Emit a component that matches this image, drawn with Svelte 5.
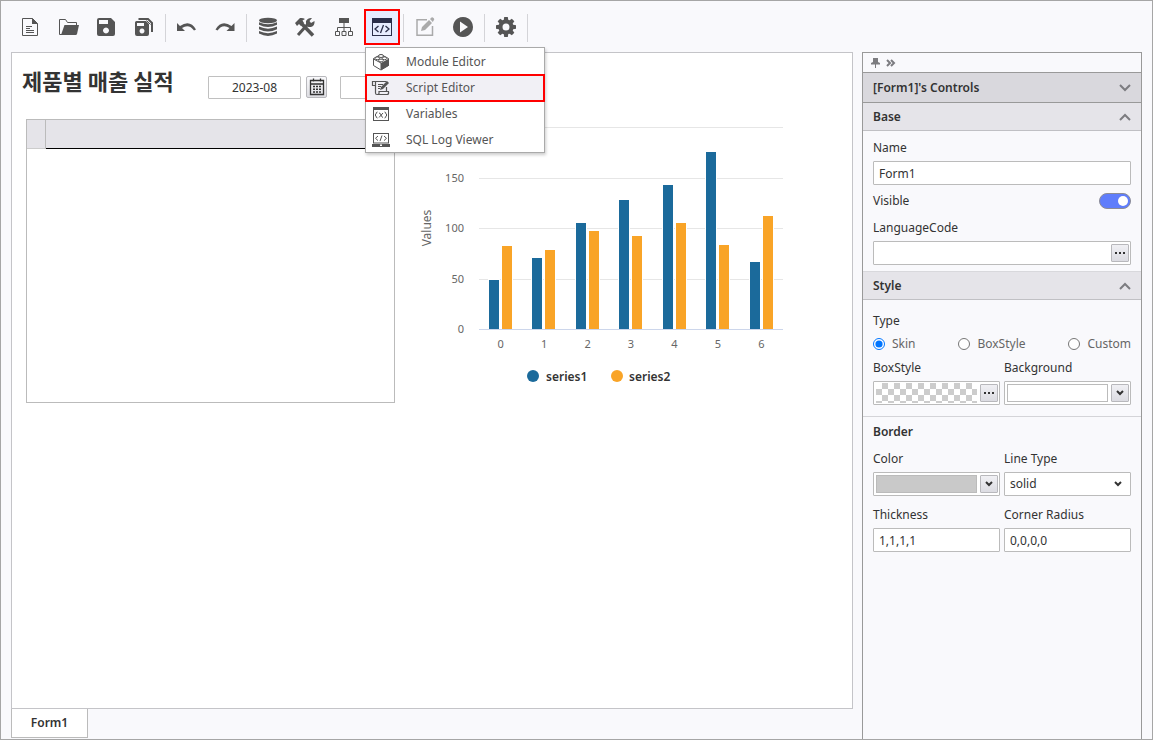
<script>
  /**
   * Form designer: toolbar, form canvas with a chart, and the property panel.
   */
  const toolGroups = [
    [
      { icon: 'new', label: 'New' },
      { icon: 'open', label: 'Open' },
      { icon: 'save', label: 'Save' },
      { icon: 'saveAll', label: 'Save all' },
    ],
    [
      { icon: 'undo', label: 'Undo' },
      { icon: 'redo', label: 'Redo' },
    ],
    [
      { icon: 'database', label: 'Data' },
      { icon: 'tools', label: 'Tools' },
      { icon: 'tree', label: 'Structure' },
      { icon: 'code', label: 'Code', menu: true },
    ],
    [
      { icon: 'edit', label: 'Edit', disabled: true },
      { icon: 'play', label: 'Run' },
    ],
    [{ icon: 'gear', label: 'Settings' }],
  ];

  const menuItems = [
    { icon: 'module', label: 'Module Editor' },
    { icon: 'script', label: 'Script Editor' },
    { icon: 'variables', label: 'Variables' },
    { icon: 'sql', label: 'SQL Log Viewer' },
  ];

  let menuOpen = $state(true);
  let selected = $state('script');

  let dateFrom = $state('2023-08');
  let dateTo = $state('');

  let name = $state('Form1');
  let visible = $state(true);
  let languageCode = $state('');
  let styleType = $state('Skin');
  let lineType = $state('solid');
  let thickness = $state('1,1,1,1');
  let radius = $state('0,0,0,0');

  // Chart geometry
  const series = [
    { name: 'series1', color: '#1b6a9b', data: [48.5, 70.3, 105, 127.7, 142.6, 175.2, 66.3] },
    { name: 'series2', color: '#f9a427', data: [82.2, 78.2, 97, 92, 105, 83.2, 111.9] },
  ];
  const plot = { left: 84, right: 388, bottom: 210, top: 8, max: 200 };
  const step = (plot.right - plot.left) / 7;
  const y = (v) => Math.round(plot.bottom - (v / plot.max) * (plot.bottom - plot.top));
  const bars = series.flatMap((s, si) =>
    s.data.map((v, i) => ({
      x: Math.round(plot.left + step * i + 10 + si * 13),
      y: y(v),
      color: s.color,
    }))
  );
</script>

{#snippet icon(id)}
  <svg class="icon" viewBox="0 0 24 24" width="24" height="24" fill="currentColor" aria-hidden="true">
    {#if id === 'new'}
      <path d="M4.500 3.500h10l5 5v12h-15v-17z" fill="none" stroke="currentColor" />
      <path d="M14 3v6h6zM8 11h6v1H8zM8 13h4v1H8zM8 15h8v1H8zM8 17h8v1H8z" />
    {:else if id === 'open'}
      <path d="M6 19.500H3.500v-15h6l2 3h9v3" fill="none" stroke="currentColor" />
      <path d="M8.500 10H23l-2 9q-.3 1-1.300 1H5z" />
    {:else if id === 'save'}
      <path fill-rule="evenodd" d="M5 3h12l4 4v12q0 2-2 2H5q-2 0-2-2V5q0-2 2-2zM5 5v4h9V5zM12 12.500a3 3 0 1 0 .01 0z" />
    {:else if id === 'saveAll'}
      <path fill-rule="evenodd" d="M4.500 6h9.500l3 3v10q0 2-2 2H5q-2 0-2-2V7.500q0-1.500 1.500-1.500zM5 8v3h7V8zM10 13.500a2.500 2.500 0 1 0 .01 0z" />
      <path d="M6.500 4h9.500l4 4v9" fill="none" stroke="currentColor" stroke-width="2" />
      <path d="M14.500 5.500L18.500 9.500" stroke="currentColor" />
    {:else if id === 'undo'}
      <path d="M2 8v8h8l-3-3q7-4.500 12 2.500l2-1Q15 4 5 11z" />
    {:else if id === 'redo'}
      <path d="M21.500 8v8h-8l3-3q-7-4.500-12 2.500l-2-1Q8.500 4 18.500 11z" />
    {:else if id === 'database'}
      <ellipse cx="12" cy="5.500" rx="9" ry="2.700" />
      <path d="M3 7.200q9 4.300 18 0v2.600q-9 4.400-18 0zM3 11.600q9 4.300 18 0v2.600q-9 4.400-18 0zM3 16q9 4.300 18 0v2.600q-9 4.800-18 0z" />
    {:else if id === 'tools'}
      <path d="M4 20l9-10" stroke="currentColor" stroke-width="3" />
      <path d="M12 10.500V6q2-3.500 6-3l-2.500 3 1.500 2 3.500-2q.5 5-3.500 6h-2.500z" />
      <path d="M7 8l12 12.500" stroke="currentColor" stroke-width="3.500" />
      <path d="M1 8l5-5q3-.5 5 1L8.500 5.500 10 8l-3 3-2-2-2 2z" />
    {:else if id === 'tree'}
      <path d="M7 3h10v5H7z" />
      <path d="M12 8v8M5.500 16v-3.500h13V16" fill="none" stroke="currentColor" />
      <path d="M3.500 16.500h4v4h-4zM10 16.500h4v4h-4zM16.500 16.500h4v4h-4z" fill="none" stroke="currentColor" />
    {:else if id === 'code'}
      <path fill-rule="evenodd" d="M2 3h20v18H2zM3 8v12h18V8z" />
      <path d="M8.500 11l-3.500 3 3.500 3M15.500 11l3.500 3-3.500 3M13.500 10l-3 8" fill="none" stroke="currentColor" stroke-width="1.300" />
    {:else if id === 'edit'}
      <path d="M14 4.800H4v15.400h15.500V11" fill="none" stroke="currentColor" stroke-width="1.500" />
      <path d="M8 16l1-4 7-7 3 3-7 7zM17 4l1.500-1.500q1-.5 2 .5l.5.500q.6 1-.2 1.800L19.800 7z" />
    {:else if id === 'play'}
      <path fill-rule="evenodd" d="M12 2a10 10 0 1 0 .01 0zM9 6.500l8 5.500-8 5.500z" />
    {:else if id === 'gear'}
      <circle cx="12" cy="12" r="5.500" fill="none" stroke="currentColor" stroke-width="4" />
      {#each [0, 45, 90, 135, 180, 225, 270, 315] as a}
        <path d="M10.200 2h3.600l.6 4H9.600z" transform="rotate({a} 12 12)" />
      {/each}
    {:else if id === 'module'}
      <path d="M4.500 8.500L12 4.500l7.500 4v7L12 20l-7.500-4.500z" fill="none" stroke="currentColor" />
      <path d="M4.500 9l7.500 4v6" fill="none" stroke="currentColor" />
      <path d="M12 13l8-4.500v7L12 20z" />
      <ellipse cx="12" cy="6" rx="2.500" ry="1.500" fill="#fff" stroke="currentColor" />
      <ellipse cx="8.300" cy="8.300" rx="2.300" ry="1.400" fill="#fff" stroke="currentColor" />
      <ellipse cx="15.500" cy="8.300" rx="2.300" ry="1.400" fill="#fff" stroke="currentColor" />
      <ellipse cx="12" cy="10.500" rx="2.300" ry="1.400" fill="#fff" stroke="currentColor" />
    {:else if id === 'script'}
      <path d="M6.500 9.500h-3v-4h14M6.500 5.500V17q0 1.500 1.500 1.500h10.500q1.500-.5 1-3H10q.5 3-1.500 3M17.500 11v4" fill="none" stroke="currentColor" stroke-width="1.200" />
      <path d="M9 8.500h5M9 10.500h3M9 12.500h2" stroke="currentColor" />
      <path d="M11 14l1-3 6-6 2 2-6 6z" />
    {:else if id === 'variables'}
      <path fill-rule="evenodd" d="M4 5h16v14H4zM5 8v10h14V8z" />
      <path d="M8.500 10q-1.500 0-1.500 2l-1 1 1 1q0 2 1.500 2M15.500 10q1.500 0 1.500 2l1 1-1 1q0 2-1.500 2M10 11q1.500 0 2 2t2 2.500M14 11l-4 4.500" fill="none" stroke="currentColor" />
    {:else if id === 'sql'}
      <path fill-rule="evenodd" d="M4 5h16v10.500H4zM5 6v8.500h14V6z" />
      <path d="M9 8l-2.500 2.300L9 12.600M15 8l2.500 2.300-2.500 2.300M13 7.500l-2 5.600" fill="none" stroke="currentColor" />
      <path fill-rule="evenodd" d="M3 16h18v3H3zM11 16.500v1.500h2v-1.500z" />
    {:else if id === 'calendar'}
      <path d="M5.500 5.500h13v14h-13zM5.500 9h13M8.500 3.500v3M15.500 3.500v3" fill="none" stroke="currentColor" stroke-width="1.300" />
      <path d="M8 11.500h8M8 14.200h8M8 17h8" stroke="currentColor" stroke-width="1.500" stroke-dasharray="2 1" />
    {/if}
  </svg>
{/snippet}

{#snippet chevron(up)}
  <svg width="12" height="8" viewBox="0 0 12 8" fill="none" stroke="#7c7c80" stroke-width="2" aria-hidden="true">
    <path d={up ? 'M1 7l5-5 5 5' : 'M1 1l5 5 5-5'} />
  </svg>
{/snippet}

{#snippet arrow()}
  <svg class="arrow" width="8" height="6" viewBox="0 0 8 6" fill="none" stroke="#333" stroke-width="2" aria-hidden="true">
    <path d="M1 1l3 3 3-3" />
  </svg>
{/snippet}

<div class="designer">
  <header class="toolbar">
    {#each toolGroups as group}
      {#each group as tool}
        {#if tool.menu}
          <div class="menu-anchor">
            <button
              class="tool"
              class:active={menuOpen}
              aria-label={tool.label}
              aria-expanded={menuOpen}
              onclick={() => (menuOpen = !menuOpen)}
            >
              {@render icon(tool.icon)}
            </button>
            {#if menuOpen}
              <div class="menu">
                {#each menuItems as item}
                  <button
                    class="menu-item"
                    class:selected={selected === item.icon}
                    onclick={() => (selected = item.icon)}
                  >
                    {@render icon(item.icon)}
                    <span>{item.label}</span>
                  </button>
                {/each}
              </div>
            {/if}
          </div>
        {:else}
          <button class="tool" disabled={tool.disabled} aria-label={tool.label}>
            {@render icon(tool.icon)}
          </button>
        {/if}
      {/each}
      <span class="separator"></span>
    {/each}
  </header>

  <div class="workspace">
    <main class="editor">
      <section class="form">
        <div class="form-head">
          <h1>제품별 매출 실적</h1>
          <div class="date">
            <input type="text" aria-label="From" bind:value={dateFrom} />
            <button aria-label="Pick start">{@render icon('calendar')}</button>
          </div>
          <div class="date">
            <input type="text" aria-label="To" bind:value={dateTo} />
            <button aria-label="Pick end">{@render icon('calendar')}</button>
          </div>
        </div>

        <div class="form-body">
          <div class="sheet">
            <table>
              <thead>
                <tr><td class="row-head"></td><td class="col-head"></td></tr>
              </thead>
            </table>
          </div>

          <svg class="chart" width="400" height="284" viewBox="0 0 400 284">
            {#each [0, 50, 100, 150, 200] as tick}
              <path class={tick ? 'grid-line' : 'base-line'} d="M{plot.left} {y(tick) + 0.5}H{plot.right}" />
              {#if tick < 200}
                <text class="tick" x="69" y={y(tick) + 4} text-anchor="end">{tick}</text>
              {/if}
            {/each}
            {#each bars as bar}
              <rect class="halo" x={bar.x - 1} y={bar.y - 1} width="12" height={plot.bottom - bar.y + 1} />
              <rect x={bar.x} y={bar.y} width="10" height={plot.bottom - bar.y} fill={bar.color} />
            {/each}
            {#each series[0].data as _, i}
              <text class="tick" x={plot.left + step * (i + 0.5)} y="229" text-anchor="middle">{i}</text>
            {/each}
            <text class="axis-title" transform="translate(36 109) rotate(-90)" text-anchor="middle">Values</text>
            {#each series as s, i}
              <circle cx={138 + i * 84} cy="257" r="6" fill={s.color} />
              <text class="legend" x={151 + i * 83} y="262">{s.name}</text>
            {/each}
          </svg>
        </div>
      </section>

      <nav class="tabs">
        <button class="tab">Form1</button>
      </nav>
    </main>

    <aside class="panel">
      <div class="panel-bar">
        <button aria-label="Pin">
          <svg width="9" height="10" viewBox="0 0 9 10" fill="#7c7c80" aria-hidden="true">
            <path d="M2 0h5v4l2 1v1.500H5V10H4V6.500H0V5l2-1z" />
          </svg>
        </button>
        <button aria-label="Collapse">
          <svg width="10" height="8" viewBox="0 0 10 8" fill="none" stroke="#7c7c80" stroke-width="2" aria-hidden="true">
            <path d="M1 1l3 3-3 3M5 1l3 3-3 3" />
          </svg>
        </button>
      </div>

      <button class="panel-title">[Form1]'s Controls {@render chevron(false)}</button>

      <button class="section-title">Base {@render chevron(true)}</button>
      <div class="section base">
        <label for="name">Name</label>
        <input id="name" class="field" type="text" bind:value={name} />
        <div class="switch-row">
          <label for="visible">Visible</label>
          <input id="visible" class="switch" type="checkbox" bind:checked={visible} />
        </div>
        <label for="lang">LanguageCode</label>
        <div class="field combo">
          <input id="lang" type="text" bind:value={languageCode} />
          <button class="mini" aria-label="Browse"><i class="dots"></i></button>
        </div>
      </div>

      <button class="section-title bordered">Style {@render chevron(true)}</button>
      <div class="section style">
        <span class="caption">Type</span>
        <div class="radios">
          {#each ['Skin', 'BoxStyle', 'Custom'] as type}
            <label><input type="radio" name="type" value={type} bind:group={styleType} />{type}</label>
          {/each}
        </div>
        <div class="columns">
          <div>
            <span class="caption">BoxStyle</span>
            <div class="field combo">
              <span class="swatch checker"></span>
              <button class="mini" aria-label="Box style"><i class="dots"></i></button>
            </div>
          </div>
          <div>
            <span class="caption">Background</span>
            <div class="field combo">
              <span class="swatch"></span>
              <button class="mini" aria-label="Background">{@render arrow()}</button>
            </div>
          </div>
        </div>
      </div>

      <div class="section border">
        <h2>Border</h2>
        <div class="columns">
          <div>
            <span class="caption">Color</span>
            <div class="field combo">
              <span class="swatch gray"></span>
              <button class="mini" aria-label="Border color">{@render arrow()}</button>
            </div>
          </div>
          <div>
            <label for="line">Line Type</label>
            <div class="select">
              <select id="line" class="field" bind:value={lineType}>
                <option>solid</option>
              </select>
              {@render arrow()}
            </div>
          </div>
          <div>
            <label for="thickness">Thickness</label>
            <input id="thickness" class="field" type="text" bind:value={thickness} />
          </div>
          <div>
            <label for="radius">Corner Radius</label>
            <input id="radius" class="field" type="text" bind:value={radius} />
          </div>
        </div>
      </div>
    </aside>
  </div>
</div>

<style>
  :global(body) {
    background: #f9f9fc;
  }

  .designer,
  .designer * {
    box-sizing: border-box;
  }

  .designer {
    display: flex;
    flex-direction: column;
    min-height: 100vh;
    border: 1px solid #a6a6a6;
    background: #f9f9fc;
    color: #333;
    font: 12px/20px 'Noto Sans', 'Noto Sans CJK KR', sans-serif;
  }

  button,
  input,
  select {
    margin: 0;
    padding: 0;
    border: 0;
    background: none;
    color: inherit;
    font: inherit;
  }

  svg {
    display: block;
    flex: none;
  }

  .toolbar {
    display: flex;
    gap: 2px;
    padding: 8px 11px 7px;
    height: 51px;
  }

  .tool {
    display: grid;
    place-items: center;
    width: 36px;
    height: 36px;
    color: #555;
  }

  .tool:disabled {
    color: #aaa;
  }

  .tool.active {
    border: 2px solid #f00;
    background: #e6ecff;
    color: #2a2e4a;
  }

  .separator {
    width: 1px;
    height: 28px;
    margin: 5px 1px;
    background: #d4d4d8;
  }

  .menu-anchor {
    position: relative;
  }

  .menu {
    position: absolute;
    top: 38px;
    left: 1px;
    z-index: 1;
    width: 180px;
    height: 106px;
    padding-top: 1px;
    border: 1px solid #aaa;
    background: #fff;
    box-shadow: 1px 2px 3px rgba(0, 0, 0, 0.2);
  }

  .menu-item {
    display: flex;
    align-items: center;
    gap: 13px;
    width: 100%;
    height: 26px;
    padding-left: 3px;
    color: #555;
    white-space: nowrap;
  }

  .menu-item.selected {
    background: #f1f0f5;
    outline: 2px solid #f00;
    outline-offset: -1px;
  }

  .workspace {
    display: flex;
    flex: 1;
    gap: 9px;
    padding: 0 10px;
  }

  .editor {
    display: flex;
    flex: 1;
    flex-direction: column;
    min-width: 0;
    padding-bottom: 1px;
  }

  .form {
    flex: 1;
    border: 1px solid #c4c4c8;
    background: #fff;
    overflow: hidden;
  }

  .form-head {
    display: flex;
    align-items: center;
    gap: 13px;
    padding: 14px 0 0 10px;
  }

  h1 {
    width: 173px;
    margin: 0;
    padding-bottom: 14px;
    font: bold 22px/26px 'Noto Sans CJK KR', sans-serif;
    white-space: nowrap;
  }

  .date {
    display: flex;
    align-items: center;
    gap: 5px;
  }

  .date input {
    width: 93px;
    height: 23px;
    border: 1px solid #c0c0c0;
    border-radius: 1px;
    text-align: center;
  }

  .date button {
    display: flex;
    align-items: center;
    justify-content: center;
    width: 21px;
    height: 22px;
    border: 1px solid #b8b8bc;
    border-radius: 2px;
    background: linear-gradient(#fafafc, #dddde2);
  }

  .form-body {
    display: flex;
    padding: 12px 14px;
  }

  .sheet {
    width: 369px;
    height: 284px;
    border: 1px solid #bbb;
  }

  table {
    width: 100%;
    border-spacing: 0;
    background: #e5e4e9;
  }

  td {
    height: 29px;
    padding: 0;
  }

  .row-head {
    width: 19px;
    border-right: 1px solid #bbb;
    border-bottom: 1px solid #ccc;
  }

  .col-head {
    border-bottom: 1px solid #000;
  }

  .grid-line {
    stroke: #e6e6e6;
  }

  .base-line {
    stroke: #ccd6eb;
  }

  .halo {
    fill: #fff;
  }

  .tick,
  .axis-title {
    fill: #666;
    font-size: 11px;
  }

  .axis-title {
    font-size: 12px;
  }

  .legend {
    fill: #333;
    font-size: 12px;
    font-weight: 600;
  }

  .tab {
    width: 77px;
    height: 29px;
    border: 1px solid #bbb;
    border-top: 0;
    background: #fff;
    font-weight: 600;
  }

  .tabs {
    display: flex;
  }

  .panel {
    display: flex;
    flex-direction: column;
    width: 280px;
    border: 1px solid #999;
    border-bottom: 0;
  }

  .panel-bar {
    display: flex;
    align-items: center;
    gap: 6px;
    height: 20px;
    padding-left: 8px;
    border-bottom: 1px solid #999;
  }

  .panel-title,
  .section-title {
    display: flex;
    align-items: center;
    justify-content: space-between;
    height: 28px;
    padding: 0 10px;
    border-bottom: 1px solid #c0c0c4;
    background: #e5e4e9;
    font-weight: 600;
  }

  .panel-title {
    height: 30px;
    border-color: #999;
    background: #d9d8dd;
  }

  .section-title.bordered {
    height: 29px;
    border-top: 1px solid #d8d8dc;
  }

  .section {
    display: flex;
    flex-direction: column;
    padding: 7px 10px 6px;
  }

  .section.style {
    padding: 11px 10px;
  }

  .section.border {
    padding-top: 5px;
    border-top: 1px solid #d4d4d8;
  }

  label,
  .caption {
    display: block;
  }

  .field {
    display: block;
    width: 100%;
    height: 24px;
    margin-top: 3px;
    padding: 0 5px;
    border: 1px solid #bbb;
    border-radius: 1px;
    background: #fff;
  }

  .combo {
    display: flex;
    align-items: center;
    gap: 3px;
    padding: 0 1px 0 2px;
  }

  .combo input {
    flex: 1;
    min-width: 0;
  }

  .mini {
    display: grid;
    place-items: center;
    width: 18px;
    height: 18px;
    border: 1px solid #b8b8bc;
    border-radius: 1px;
    background: linear-gradient(#f0f0f4, #dcdce2);
  }

  .dots {
    width: 10px;
    height: 2px;
    background: repeating-linear-gradient(90deg, #333 0 2px, transparent 2px 4px);
  }

  .swatch {
    flex: 1;
    height: 18px;
    border: 1px solid #bbb;
  }

  .swatch.gray {
    background: #c9c9c9;
  }

  .swatch.checker {
    height: 20px;
    border: 0;
    background: repeating-conic-gradient(#ccc 0 25%, #fff 0 50%) 0 0 / 12px 12px;
  }

  .switch-row {
    display: flex;
    align-items: center;
    justify-content: space-between;
    margin: 6px 0 7px;
  }

  .switch {
    display: flex;
    align-items: center;
    width: 32px;
    height: 16px;
    padding: 0 2px;
    border: 1px solid #8c8c96;
    border-radius: 8px;
    background: #bbb;
    appearance: none;
  }

  .switch:checked {
    justify-content: flex-end;
    background: #5f7dfb;
  }

  .switch::before {
    width: 10px;
    height: 10px;
    border-radius: 50%;
    background: #fff;
    content: '';
  }

  .radios {
    display: flex;
    justify-content: space-between;
    margin: 3px 0 4px;
  }

  .radios label {
    display: flex;
    align-items: center;
    gap: 7px;
    color: #666;
  }

  .radios input {
    width: 12px;
    height: 12px;
  }

  .columns {
    display: grid;
    grid-template-columns: 1fr 1fr;
    gap: 9px 4px;
  }

  h2 {
    margin: 0 0 7px;
    font: inherit;
    font-weight: 600;
  }

  .select {
    display: grid;
    align-items: center;
  }

  .select > :global(*) {
    grid-area: 1 / 1;
  }

  .select select {
    appearance: none;
  }

  .select .arrow {
    justify-self: end;
    margin: 3px 9px 0;
    pointer-events: none;
  }
</style>
